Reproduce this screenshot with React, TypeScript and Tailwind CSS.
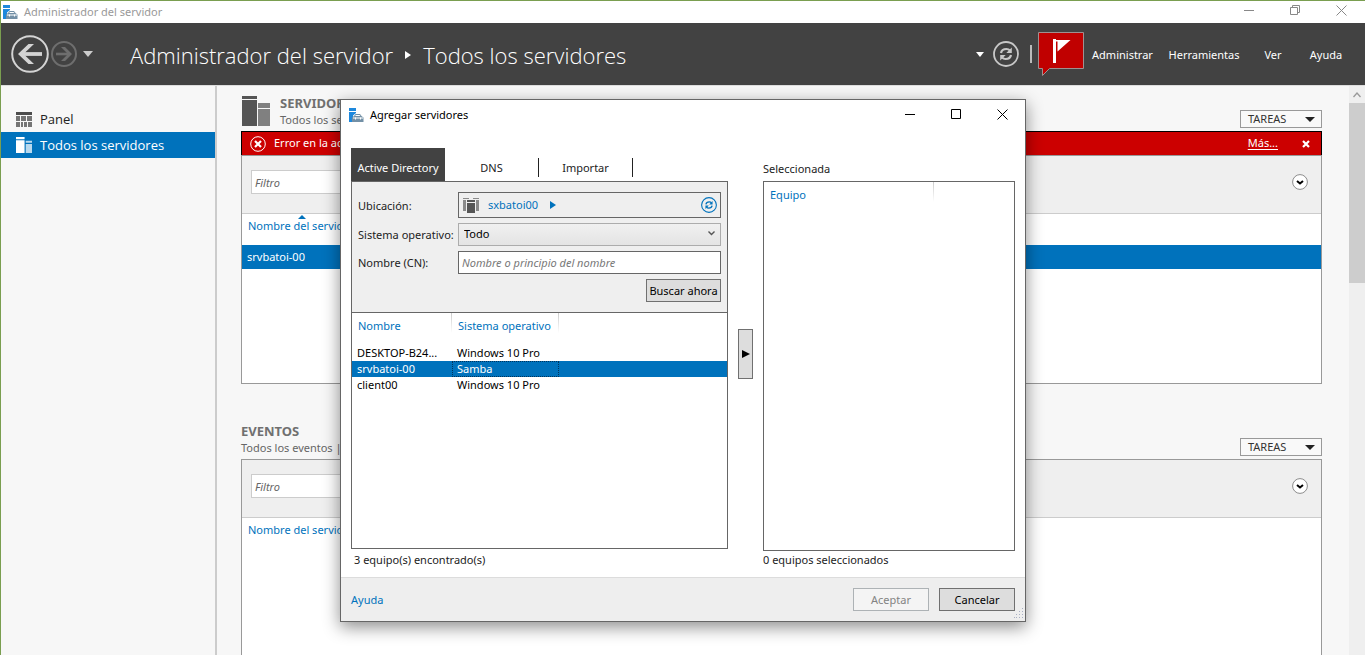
import React from "react";

function ServerManagerIcon() {
  return (
    <svg width="15" height="15" viewBox="0 0 15 15" aria-hidden="true" className="shrink-0">
      <path d="M0 0h7v3H0zM0 4h7v1L4 7.500V14H0z" fill="#1e88dc" />
      <path d="M3 9.500L5 8l1.500-2h4.500L12.500 8l2 1.500V14H3z" fill="#7390a6" />
      <path d="M6 8l1-1h3.500l1 1zM4 9.600h10v.9H4z" fill="#fff" />
      <path d="M6 9.500h1v2H6zM11 9.500h1v2h-1z" fill="#fff" />
    </svg>
  );
}

function ServersIcon({ dark, light, size }: { dark: string; light: string; size: "sm" | "lg" }) {
  return (
    <svg
      viewBox="0 0 28 30"
      aria-hidden="true"
      className={size === "lg" ? "h-[30px] w-7 shrink-0" : "h-4 w-4 shrink-0"}
      preserveAspectRatio="none"
    >
      <path d={size === "lg" ? "M0 0h15v3H0zM0 4h15v26H0z" : "M0 0h15v4H0zM0 6h15v24H0z"} fill={dark} />
      <path d={size === "lg" ? "M16 7h12v5H16zM16 13h12v17H16z" : "M17 7h11v4H17zM17 13h11v17H17z"} fill={light} />
    </svg>
  );
}

function PanelIcon() {
  return (
    <svg width="16" height="15" viewBox="0 0 16 15" aria-hidden="true" className="shrink-0">
      <path d="M0 0h16v3H0z" fill="#4d4d4d" />
      <path d="M0 4h4v5H0zM5 4h5v5H5zM11 4h5v5h-5zM0 10h4v5H0zM5 10h2v5H5zM8 10h3v5H8zM12 10h4v5h-4z" fill="#757575" />
    </svg>
  );
}

function ForestIcon() {
  return (
    <svg width="16" height="16" viewBox="0 0 16 16" aria-hidden="true" className="shrink-0">
      <path d="M0 1h6v1H0zM0 3h3v11H0zM10 1h6v1h-6zM13 3h3v11h-3z" fill="#8a8a8a" />
      <path d="M4 3h8v2H4zM4 6h8v10H4z" fill="#555" />
    </svg>
  );
}

function RefreshIcon({ className }: { className: string }) {
  return (
    <svg viewBox="0 0 26 26" aria-hidden="true" className={className} fill="none" stroke="currentColor">
      <circle cx="13" cy="13" r="12" strokeWidth="1.800" />
      <path d="M8 12c.5-3 3-4 5.500-4 1.500 0 2.500.5 3.500 1.500M18 14c-.5 3-3 4-5.500 4-1.500 0-2.500-.5-3.500-1.500" strokeWidth="2.200" />
      <path d="M18.800 6.500v5.500h-5.500zM7.200 19.500V14h5.500z" fill="currentColor" stroke="none" />
    </svg>
  );
}

function ExpandButton() {
  return (
    <button aria-label="Expandir filtros" className="h-4 w-4">
      <svg viewBox="0 0 16 16" className="h-4 w-4">
        <circle cx="8" cy="8" r="7.400" fill="#fff" stroke="#8c8c8c" />
        <path d="M5 7l3 2.500L11 7" fill="none" stroke="#000" strokeWidth="2" />
      </svg>
    </button>
  );
}

function TasksButton() {
  return (
    <button className="flex h-[18px] w-[82px] shrink-0 items-center justify-between border border-[#999] bg-[#f9f9f9] pr-1.5 pl-[7px] text-[#333]">
      TAREAS
      <svg width="10" height="5" viewBox="0 0 10 5" aria-hidden="true">
        <path d="M0 0h10L5 5z" fill="#222" />
      </svg>
    </button>
  );
}

function FilterBar({ id }: { id: string }) {
  return (
    <div className="flex h-[58px] items-center justify-between border-b border-[#ccc] bg-[#efefef] pr-[13px] pb-[5px] pl-[9px]">
      <input
        id={id}
        aria-label="Filtro"
        placeholder="Filtro"
        className="h-6 w-64 border border-[#ccc] bg-white px-[3px] italic placeholder:text-[#666]"
      />
      <ExpandButton />
    </div>
  );
}

function TitleBar() {
  return (
    <div className="flex h-[22px] items-center justify-between bg-white pr-px pl-0.5 text-[#999]">
      <div className="flex items-center gap-1.5">
        <ServerManagerIcon />
        <span>Administrador del servidor</span>
      </div>
      <div className="flex h-full">
        <button aria-label="Minimizar" className="flex w-[46px] items-center justify-center pb-1">
          <svg width="10" height="10" viewBox="0 0 10 10"><path d="M0 5.500h10" stroke="#888" /></svg>
        </button>
        <button aria-label="Restaurar" className="flex w-[46px] items-center justify-center pb-1">
          <svg width="10" height="10" viewBox="0 0 10 10" fill="none" stroke="#888">
            <path d="M.5 2.500h7v7h-7zM2.500 2.500v-2h7v7h-2" />
          </svg>
        </button>
        <button aria-label="Cerrar" className="flex w-[46px] items-center justify-center pb-1">
          <svg width="11" height="11" viewBox="0 0 11 11"><path d="M.5.500l10 10m0-10l-10 10" stroke="#888" /></svg>
        </button>
      </div>
    </div>
  );
}

function Header() {
  return (
    <header className="flex h-[63px] shrink-0 items-center justify-between border-b border-[#ddd] bg-[#424242] pr-4 pl-2.5 text-white">
      <div className="flex items-center">
        <button aria-label="Atrás">
          <svg width="38" height="38" viewBox="0 0 38 38" fill="none" stroke="#d4d4d4">
            <circle cx="19" cy="19" r="17.800" strokeWidth="2" />
            <path d="M31 19H10" strokeWidth="3.800" />
            <path d="M17.500 9L7 19l10.500 10h5.500L12.500 19 23 9z" fill="#d4d4d4" stroke="none" />
          </svg>
        </button>
        <button aria-label="Adelante" className="ml-0.5">
          <svg width="26" height="26" viewBox="0 0 26 26" fill="none" stroke="#6e6e6e">
            <circle cx="13" cy="13" r="12" strokeWidth="2" />
            <path d="M5 13h14" strokeWidth="2.600" />
            <path d="M14 6l7 7-7 7h-4l7-7-7-7z" fill="#6e6e6e" stroke="none" />
          </svg>
        </button>
        <button aria-label="Historial" className="ml-1.5">
          <svg width="10" height="6" viewBox="0 0 10 6"><path d="M0 0h10L5 6z" fill="#ccc" /></svg>
        </button>
        <h1 className="ml-[37px] flex items-center gap-3 pt-0.5 font-['Open_Sans',sans-serif] text-[22px] font-light whitespace-nowrap">
          <span>Administrador del servidor</span>
          <svg width="6" height="8" viewBox="0 0 6 8" aria-hidden="true"><path d="M0 0l6 4-6 4z" fill="#fff" /></svg>
          <span>Todos los servidores</span>
        </h1>
      </div>
      <div className="flex items-center text-[11px]">
        <button aria-label="Opciones">
          <svg width="8" height="5" viewBox="0 0 8 5"><path d="M0 0h8L4 5z" fill="#fff" /></svg>
        </button>
        <button aria-label="Actualizar" className="ml-[9px] text-[#c8c8c8]">
          <RefreshIcon className="h-[26px] w-[26px]" />
        </button>
        <span className="ml-[11px] h-[18px] w-0.5 bg-[#bbb]" />
        <button aria-label="Notificaciones" className="ml-1.5">
          <svg width="46" height="44" viewBox="0 0 46 44">
            <path d="M.5.500h45v36H11.500L4.500 43.500v-7H.5z" fill="#c00000" stroke="#a09090" />
            <path d="M15 7h3v24h-3zM18 8h14.500L19.500 19.500V9.500H18z" fill="#fff" />
          </svg>
        </button>
        <nav className="flex items-center gap-1 pt-0.5">
          <button className="w-[77px] text-center">Administrar</button>
          <button className="w-[78px] text-center">Herramientas</button>
          <button className="w-[52px] text-center">Ver</button>
          <button className="w-[46px] text-center">Ayuda</button>
        </nav>
      </div>
    </header>
  );
}

function Sidebar() {
  return (
    <nav className="w-[216px] shrink-0 border-r-2 border-[#ccc] bg-[#f7f7f7] pt-5 font-['Open_Sans',sans-serif] text-[13px]">
      <a href="#panel" className="flex h-[26px] items-center gap-2 pl-[15px] text-[#222]">
        <PanelIcon />
        <span className="pt-0.5">Panel</span>
      </a>
      <a href="#todos" className="flex h-[26px] items-center gap-2 bg-[#0072bc] pl-[15px] text-white">
        <ServersIcon dark="#ffffff" light="#b9d9ee" size="sm" />
        <span className="pt-0.5">Todos los servidores</span>
      </a>
    </nav>
  );
}

function ServersSection() {
  return (
    <section>
      <div className="flex h-[45px] items-end justify-between pb-[3px]">
        <div className="flex items-center gap-2.5 pl-px">
          <ServersIcon dark="#555555" light="#808080" size="lg" />
          <div className="leading-4 text-[#666]">
            <h2 className="text-[13px] leading-[18px] font-bold text-[#707070]">SERVIDORES</h2>
            <p>Todos los servidores</p>
          </div>
        </div>
        <TasksButton />
      </div>
      <div className="flex h-6 items-center justify-between border-x border-t border-black bg-[#c00] pr-[11px] pl-2 text-white">
        <div className="flex items-center gap-2">
          <svg width="16" height="16" viewBox="0 0 16 16" aria-hidden="true" fill="none" stroke="#fff">
            <circle cx="8" cy="8" r="7.300" />
            <path d="M5 5l6 6m0-6l-6 6" strokeWidth="2.200" />
          </svg>
          <span>Error en la actualización</span>
        </div>
        <div className="flex items-center gap-6">
          <a href="#mas" className="underline underline-offset-2">Más...</a>
          <button aria-label="Cerrar aviso">
            <svg width="8" height="8" viewBox="0 0 8 8"><path d="M1 1l6 6m0-6L1 7" stroke="#fff" strokeWidth="2.200" /></svg>
          </button>
        </div>
      </div>
      <div className="h-[229px] border border-[#999] bg-white">
        <FilterBar id="filtro-servidores" />
        <table className="w-full text-left">
          <thead>
            <tr className="h-[31px]">
              <th className="relative pb-2 pl-1.5 align-middle leading-4 font-normal text-[#0072bc]">
                <svg width="8" height="4" viewBox="0 0 8 4" aria-hidden="true" className="absolute top-px left-14">
                  <path d="M0 4h8L4 0z" fill="#0072bc" />
                </svg>
                Nombre del servidor
              </th>
            </tr>
          </thead>
          <tbody>
            <tr className="h-6 bg-[#0072bc] text-white">
              <td className="pl-[5px]">srvbatoi-00</td>
            </tr>
          </tbody>
        </table>
      </div>
    </section>
  );
}

function EventsSection() {
  return (
    <section className="flex flex-1 flex-col">
      <div className="flex h-[75px] items-end justify-between pb-[3px]">
        <div className="leading-4 text-[#666]">
          <h2 className="text-[13px] leading-[18px] font-bold text-[#707070]">EVENTOS</h2>
          <p>Todos los eventos | 0 en total</p>
        </div>
        <TasksButton />
      </div>
      <div className="flex-1 border border-b-0 border-[#999] bg-white">
        <FilterBar id="filtro-eventos" />
        <p className="pt-1 pl-1.5 leading-4 text-[#0072bc]">Nombre del servidor</p>
      </div>
    </section>
  );
}

const headLine =
  "bg-[linear-gradient(#ccc,#fff)] bg-[length:1px_20px] bg-[position:right_top] bg-no-repeat font-normal text-[#0072bc]";

const computers = [
  { name: "DESKTOP-B24...", os: "Windows 10 Pro", selected: false },
  { name: "srvbatoi-00", os: "Samba", selected: true },
  { name: "client00", os: "Windows 10 Pro", selected: false },
];

function SearchForm() {
  return (
    <form
      className="grid h-[131px] grid-cols-[101px_1fr] content-start items-center gap-y-[5px] border-b border-[#666] bg-[#efefef] pt-2.5 pr-1.5 pl-[5px] text-[#222]"
      onSubmit={(e) => e.preventDefault()}
    >
      <span className="pt-0.5 pl-px">Ubicación:</span>
      <div className="flex h-[26px] items-center border border-[#666] pr-[3px] pl-1">
        <ForestIcon />
        <a href="#dominio" className="ml-[9px] text-[#0072bc]">sxbatoi00</a>
        <svg width="6" height="8" viewBox="0 0 6 8" aria-hidden="true" className="ml-3">
          <path d="M0 0l6 4-6 4z" fill="#0072bc" />
        </svg>
        <button type="button" aria-label="Actualizar ubicación" className="ml-auto text-[#0072bc]">
          <RefreshIcon className="h-4 w-4" />
        </button>
      </div>
      <label htmlFor="so" className="pt-0.5 pl-px whitespace-nowrap">Sistema operativo:</label>
      <div className="relative">
        <select
          id="so"
          className="block h-[23px] w-full appearance-none border border-[#acacac] bg-linear-to-b from-[#f0f0f0] to-[#e4e4e4] px-[5px] text-black"
        >
          <option>Todo</option>
        </select>
        <svg width="7" height="5" viewBox="0 0 7 5" aria-hidden="true" className="pointer-events-none absolute top-2 right-1.5">
          <path d="M.5.500l3 3 3-3" fill="none" stroke="#555" strokeWidth="1.400" />
        </svg>
      </div>
      <label htmlFor="cn" className="pt-0.5 pl-px">Nombre (CN):</label>
      <input
        id="cn"
        placeholder="Nombre o principio del nombre"
        className="h-[23px] w-full border border-[#666] bg-white px-[3px] italic placeholder:text-[#777]"
      />
      <button className="col-span-2 flex h-[23px] w-[75px] items-center justify-center justify-self-end border border-[#707070] bg-[#ddd] pt-0.5 whitespace-nowrap text-black">
        Buscar ahora
      </button>
    </form>
  );
}

function AddServersDialog() {
  return (
    <div
      role="dialog"
      aria-label="Agregar servidores"
      className="flex h-[523px] w-[686px] flex-col border border-[#666] bg-white shadow-[0_5px_16px_rgba(0,0,0,0.45)]"
    >
      <div className="flex h-[30px] shrink-0 justify-between pl-2">
        <div className="flex items-center gap-1.5 text-black">
          <ServerManagerIcon />
          <span>Agregar servidores</span>
        </div>
        <div className="flex">
          <button aria-label="Minimizar" className="flex w-[46px] items-center justify-center pb-0.5">
            <svg width="10" height="10" viewBox="0 0 10 10"><path d="M0 5.500h10" stroke="#000" /></svg>
          </button>
          <button aria-label="Maximizar" className="flex w-[46px] items-center justify-center pb-0.5">
            <svg width="10" height="10" viewBox="0 0 10 10"><path d="M.5.500h9v9h-9z" fill="none" stroke="#000" /></svg>
          </button>
          <button aria-label="Cerrar" className="flex w-[46px] items-center justify-center pb-0.5">
            <svg width="11" height="11" viewBox="0 0 11 11"><path d="M.5.500l10 10m0-10l-10 10" stroke="#000" /></svg>
          </button>
        </div>
      </div>

      <div className="flex flex-1 px-2.5 pt-[18px] text-[#222]">
        <div className="flex w-[377px] flex-col">
          <div role="tablist" className="flex h-[33px]">
            <button role="tab" aria-selected="true" className="w-[94px] bg-[#424242] pt-2 whitespace-nowrap text-white">
              Active Directory
            </button>
            <button role="tab" aria-selected="false" className="mt-2.5 mb-1 w-[94px] border-r border-[#222] pt-0.5">
              DNS
            </button>
            <button role="tab" aria-selected="false" className="mt-2.5 mb-1 w-[94px] border-r border-[#222] pt-0.5">
              Importar
            </button>
          </div>
          <div className="h-[368px] border border-[#666]">
            <SearchForm />
            <table className="w-full table-fixed border-collapse text-left leading-4">
              <colgroup>
                <col className="w-[100px]" />
                <col className="w-[107px]" />
                <col />
              </colgroup>
              <thead>
                <tr className="h-8">
                  <th className={headLine + " pb-1.5 pl-1.5"}>Nombre</th>
                  <th className={headLine + " pb-1.5 pl-1.5"}>Sistema operativo</th>
                  <th aria-hidden="true" />
                </tr>
              </thead>
              <tbody>
                {computers.map((c) => (
                  <tr key={c.name} className={c.selected ? "h-4 bg-[#0072bc] text-white" : "h-4 text-black"}>
                    <td className="pl-[5px] whitespace-nowrap">{c.name}</td>
                    <td className={c.selected ? "pl-[5px] outline-1 -outline-offset-1 outline-[#00345c] outline-dotted" : "pl-[5px]"}>
                      {c.os}
                    </td>
                    <td />
                  </tr>
                ))}
              </tbody>
            </table>
          </div>
          <p className="pt-[3px] pl-[3px] leading-4">3 equipo(s) encontrado(s)</p>
        </div>

        <button
          aria-label="Agregar seleccionado"
          className="mx-2.5 mt-[181px] flex h-[50px] w-[15px] items-center justify-center border border-[#707070] bg-[#ddd]"
        >
          <svg width="8" height="8" viewBox="0 0 8 8" className="shrink-0"><path d="M0 0l8 4-8 4z" fill="#000" /></svg>
        </button>

        <div className="flex flex-1 flex-col">
          <p className="flex h-[33px] items-center pt-2.5">Seleccionada</p>
          <div className="h-[370px] border border-[#666]">
            <table className="w-full table-fixed text-left leading-4">
              <colgroup>
                <col className="w-[170px]" />
                <col />
              </colgroup>
              <thead>
                <tr className="h-8">
                  <th className={headLine + " pb-1.5 pl-1.5"}>Equipo</th>
                  <th aria-hidden="true" />
                </tr>
              </thead>
            </table>
          </div>
          <p className="pt-px leading-4">0 equipos seleccionados</p>
        </div>
      </div>

      <div className="relative flex h-[44px] shrink-0 items-center gap-2.5 border-t border-[#dcdcdc] bg-[#eee] px-2.5">
        <a href="#ayuda" className="mr-auto pt-0.5 text-[#0072bc]">Ayuda</a>
        <button disabled className="h-[23px] w-[76px] border border-[#adb2b5] bg-[#f4f4f4] pt-0.5 text-[#838383]">Aceptar</button>
        <button className="h-[23px] w-[76px] border border-[#707070] bg-[#ddd] pt-0.5 text-black">Cancelar</button>
        <svg width="10" height="12" viewBox="0 0 10 12" aria-hidden="true" className="absolute right-px bottom-px">
          <path
            d="M8 0h1v1H8zM5 3h1v1H5zM8 3h1v1H8zM2 6h1v1H2zM5 6h1v1H5zM8 6h1v1H8zM0 9h1v1H0zM2 9h1v1H2zM5 9h1v1H5zM8 9h1v1H8z"
            fill="#a9b0c4"
          />
        </svg>
      </div>
    </div>
  );
}

export default function App() {
  return (
    <div className="relative flex h-screen flex-col overflow-hidden border-t border-l border-[#7a9e50] bg-[#f7f7f7] font-['Noto_Sans','Open_Sans',sans-serif] text-[11px]">
      <TitleBar />
      <Header />
      <div className="flex min-h-0 flex-1">
        <Sidebar />
        <main className="flex min-w-0 flex-1 flex-col pr-[27px] pl-6">
          <ServersSection />
          <EventsSection />
        </main>
        <div className="flex w-4 shrink-0 flex-col bg-[#efefef]">
          <button aria-label="Subir" className="flex h-[17px] items-center justify-center">
            <svg width="8" height="6" viewBox="0 0 8 6"><path d="M.5 5L4 1l3.500 4" fill="none" stroke="#999" strokeWidth="1.300" /></svg>
          </button>
          <div className="h-[180px] bg-[#cdcdcd]" />
        </div>
      </div>
      <div className="absolute inset-x-0 top-[98px] flex justify-center">
        <AddServersDialog />
      </div>
    </div>
  );
}
